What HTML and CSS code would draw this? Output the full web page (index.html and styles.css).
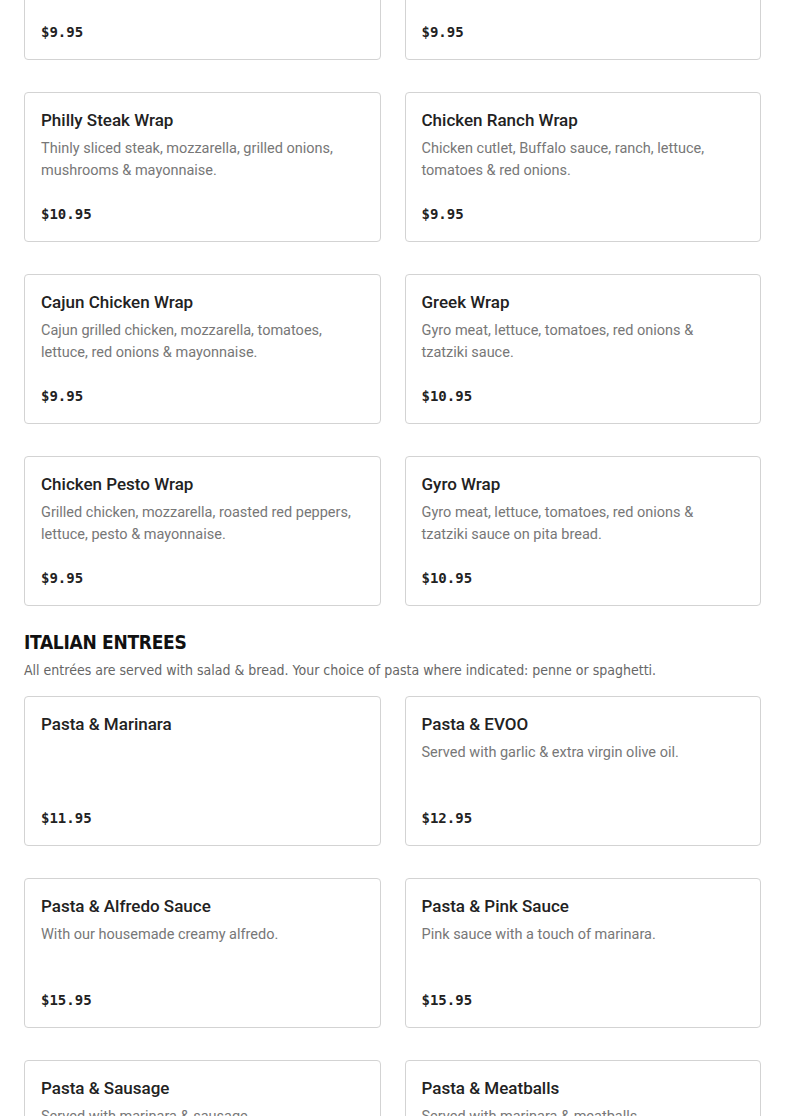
FILE: index.html
```html
<!DOCTYPE html>
<html lang="en">
<head>
<meta charset="utf-8">
<title>Menu</title>
<link rel="stylesheet" href="styles.css">
</head>
<body>
<main class="page">
  <section class="section">
    <div class="grid">
      <article class="card">
        <h3 class="item-title">Chicken Caesar Wrap</h3>
        <p class="item-desc">Grilled chicken, romaine lettuce, parmesan &amp; Caesar dressing.</p>
        <p class="item-price">$9.95</p>
      </article>
      <article class="card">
        <h3 class="item-title">Buffalo Chicken Wrap</h3>
        <p class="item-desc">Chicken cutlet, Buffalo sauce, lettuce, tomatoes &amp; blue cheese.</p>
        <p class="item-price">$9.95</p>
      </article>
      <article class="card">
        <h3 class="item-title">Philly Steak Wrap</h3>
        <p class="item-desc">Thinly sliced steak, mozzarella, grilled onions, mushrooms &amp; mayonnaise.</p>
        <p class="item-price">$10.95</p>
      </article>
      <article class="card">
        <h3 class="item-title">Chicken Ranch Wrap</h3>
        <p class="item-desc">Chicken cutlet, Buffalo sauce, ranch, lettuce, tomatoes &amp; red onions.</p>
        <p class="item-price">$9.95</p>
      </article>
      <article class="card">
        <h3 class="item-title">Cajun Chicken Wrap</h3>
        <p class="item-desc">Cajun grilled chicken, mozzarella, tomatoes, lettuce, red onions &amp; mayonnaise.</p>
        <p class="item-price">$9.95</p>
      </article>
      <article class="card">
        <h3 class="item-title">Greek Wrap</h3>
        <p class="item-desc">Gyro meat, lettuce, tomatoes, red onions &amp; tzatziki sauce.</p>
        <p class="item-price">$10.95</p>
      </article>
      <article class="card">
        <h3 class="item-title">Chicken Pesto Wrap</h3>
        <p class="item-desc">Grilled chicken, mozzarella, roasted red peppers, lettuce, pesto &amp; mayonnaise.</p>
        <p class="item-price">$9.95</p>
      </article>
      <article class="card">
        <h3 class="item-title">Gyro Wrap</h3>
        <p class="item-desc">Gyro meat, lettuce, tomatoes, red onions &amp; tzatziki sauce on pita bread.</p>
        <p class="item-price">$10.95</p>
      </article>
    </div>
  </section>

  <section class="section">
    <h2 class="section-title">ITALIAN ENTREES</h2>
    <p class="section-note">All entrées are served with salad &amp; bread. Your choice of pasta where indicated: penne or spaghetti.</p>
    <div class="grid">
      <article class="card">
        <h3 class="item-title">Pasta &amp; Marinara</h3>
        <p class="item-price">$11.95</p>
      </article>
      <article class="card">
        <h3 class="item-title">Pasta &amp; EVOO</h3>
        <p class="item-desc">Served with garlic &amp; extra virgin olive oil.</p>
        <p class="item-price">$12.95</p>
      </article>
      <article class="card">
        <h3 class="item-title">Pasta &amp; Alfredo Sauce</h3>
        <p class="item-desc">With our housemade creamy alfredo.</p>
        <p class="item-price">$15.95</p>
      </article>
      <article class="card">
        <h3 class="item-title">Pasta &amp; Pink Sauce</h3>
        <p class="item-desc">Pink sauce with a touch of marinara.</p>
        <p class="item-price">$15.95</p>
      </article>
      <article class="card">
        <h3 class="item-title">Pasta &amp; Sausage</h3>
        <p class="item-desc">Served with marinara &amp; sausage.</p>
        <p class="item-price">$15.95</p>
      </article>
      <article class="card">
        <h3 class="item-title">Pasta &amp; Meatballs</h3>
        <p class="item-desc">Served with marinara &amp; meatballs.</p>
        <p class="item-price">$15.95</p>
      </article>
    </div>
  </section>
</main>
</body>
</html>
```
FILE: styles.css
```css
* { box-sizing: border-box; }
html, body { margin: 0; padding: 0; background: #fff; }
body { font-family: "Roboto", "Liberation Sans", sans-serif; color: #222; }
.page { padding: 0 24px; margin-top: -90px; }
.section { margin: 0; }
.section + .section { margin-top: 24px; }
.grid {
  display: grid;
  grid-template-columns: 1fr 1fr;
  column-gap: 24px;
  row-gap: 32px;
}
.card {
  border: 1px solid #d3d3d3;
  border-radius: 4px;
  padding: 15px 20px 16px 16px;
  min-height: 150px;
  display: flex;
  flex-direction: column;
}
.item-title {
  margin: 0 0 6px;
  font-size: 17px;
  line-height: 24px;
  font-weight: 500;
  color: #222;
}
.item-desc {
  margin: 0;
  font-size: 14.5px;
  line-height: 22px;
  color: #777;
}
.item-price {
  margin: auto 0 0;
  font-family: "DejaVu Sans Mono", "Liberation Mono", monospace;
  font-weight: 700;
  font-size: 14px;
  line-height: 22px;
  color: #222;
}
.section-title {
  margin: 0 0 4px;
  font-family: "DejaVu Sans Condensed", "DejaVu Sans", sans-serif;
  font-stretch: condensed;
  font-weight: 700;
  font-size: 19px;
  line-height: 24px;
  letter-spacing: -0.3px;
  color: #111;
}
.section-note {
  margin: 0 0 14px;
  font-family: "DejaVu Sans Condensed", "DejaVu Sans", sans-serif;
  font-stretch: condensed;
  font-size: 14px;
  line-height: 24px;
  color: #666;
}
```
